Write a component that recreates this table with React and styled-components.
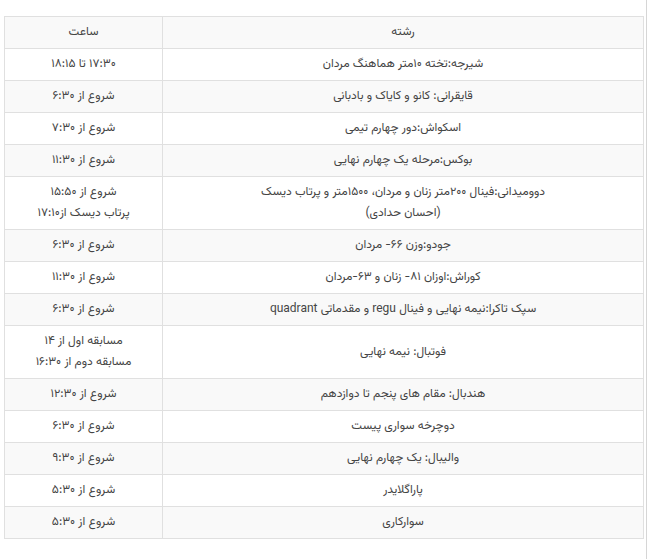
import styled, { createGlobalStyle } from 'styled-components';

const GlobalStyle = createGlobalStyle`
  html, body {
    margin: 0;
    padding: 0;
    background: #fff;
  }
`;

export const Page = styled.div`
  width: 647px;
  min-height: 559px;
  border-right: 1px solid #d6d6d6;
  padding: 16px 0 0 4px;
  box-sizing: border-box;
`;

export const Table = styled.table`
  width: 640px;
  border-collapse: collapse;
  direction: rtl;
  font-family: 'Vazirmatn', 'Noto Sans Arabic', 'DejaVu Sans', sans-serif;
  font-size: 12px;
  color: #444;
  table-layout: fixed;
`;

export const Row = styled.tr`
  background: ${(p) => (p.$shaded ? '#f9f9f9' : '#fff')};
`;

export const Cell = styled.td`
  border: 1px solid #e0e0e0;
  padding: 5px 8px;
  line-height: 21px;
  text-align: center;
  vertical-align: middle;
  width: ${(p) => (p.$narrow ? '141px' : 'auto')};
`;

export const Line = styled.div`
  white-space: nowrap;
`;

const rows = [
  [['شیرجه:تخته ۱۰متر هماهنگ مردان'], ['۱۷:۳۰ تا ۱۸:۱۵']],
  [['قایقرانی: کانو و کایاک و بادبانی'], ['شروع از ۶:۳۰']],
  [['اسکواش:دور چهارم تیمی'], ['شروع از ۷:۳۰']],
  [['بوکس:مرحله یک چهارم نهایی'], ['شروع از ۱۱:۳۰']],
  [
    ['دوومیدانی:فینال ۲۰۰متر زنان و مردان، ۱۵۰۰متر و پرتاب دیسک', '(احسان حدادی)'],
    ['شروع از ۱۵:۵۰', 'پرتاب دیسک از۱۷:۱۰'],
  ],
  [['جودو:وزن ۶۶- مردان'], ['شروع از ۶:۳۰']],
  [['کوراش:اوزان ۸۱- زنان و ۶۳-مردان'], ['شروع از ۱۱:۳۰']],
  [['سپک تاکرا:نیمه نهایی و فینال regu و مقدماتی quadrant'], ['شروع از ۶:۳۰']],
  [['فوتبال: نیمه نهایی'], ['مسابقه اول از ۱۴', 'مسابقه دوم از ۱۶:۳۰']],
  [['هندبال: مقام های پنجم تا دوازدهم'], ['شروع از ۱۲:۳۰']],
  [['دوچرخه سواری پیست'], ['شروع از ۶:۳۰']],
  [['والیبال: یک چهارم نهایی'], ['شروع از ۹:۳۰']],
  [['پاراگلایدر'], ['شروع از ۵:۳۰']],
  [['سوارکاری'], ['شروع از ۵:۳۰']],
];

function App() {
  return (
    <>
      <GlobalStyle />
      <Page>
        <Table>
          <tbody>
            <Row $shaded>
              <Cell>رشته</Cell>
              <Cell $narrow>ساعت</Cell>
            </Row>
            {rows.map(([sport, times], i) => (
              <Row key={i} $shaded={i % 2 === 1}>
                <Cell>
                  {sport.map((s, j) => (
                    <Line key={j}>{s}</Line>
                  ))}
                </Cell>
                <Cell $narrow>
                  {times.map((t, j) => (
                    <Line key={j}>{t}</Line>
                  ))}
                </Cell>
              </Row>
            ))}
          </tbody>
        </Table>
      </Page>
    </>
  );
}

export default App;
